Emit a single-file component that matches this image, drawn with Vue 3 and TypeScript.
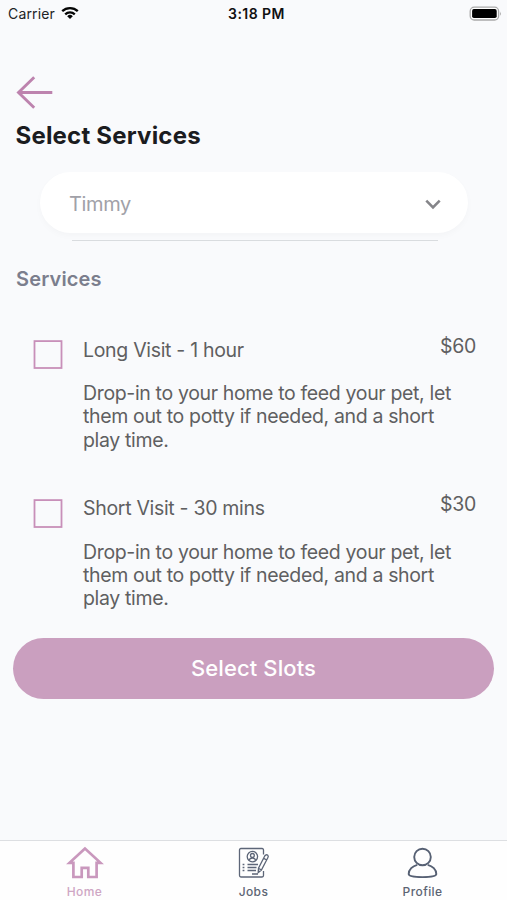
<script setup lang="ts">
import { ref } from 'vue'

interface Service {
  id: number
  name: string
  price: string
  description: string
}

const pet = ref('Timmy')
const selected = ref<number[]>([])
const services: Service[] = [
  {
    id: 1,
    name: 'Long Visit - 1 hour',
    price: '$60',
    description: 'Drop-in to your home to feed your pet, let them out to potty if needed, and a short play time.',
  },
  {
    id: 2,
    name: 'Short Visit - 30 mins',
    price: '$30',
    description: 'Drop-in to your home to feed your pet, let them out to potty if needed, and a short play time.',
  },
]

function toggle(id: number): void {
  selected.value = selected.value.includes(id)
    ? selected.value.filter((s) => s !== id)
    : [...selected.value, id]
}
</script>

<template>
  <div class="screen">
    <header class="status">
      <div class="carrier">
        <span class="carrier-name">Carrier</span>
        <svg class="wifi" width="18" height="13" viewBox="0 0 18 13">
          <g fill="none" stroke="#050505" stroke-width="2.3">
            <path d="M1.2 4.2 A11.2 11.2 0 0 1 16.8 4.2" />
            <path d="M4.2 7.3 A7 7 0 0 1 13.8 7.3" />
          </g>
          <path d="M6.2 9.2 A4 4 0 0 1 11.8 9.2 L9 12 Z" fill="#050505" />
        </svg>
      </div>
      <span class="time">3:18 PM</span>
      <div class="power">
        <svg width="33" height="15" viewBox="0 0 33 15">
          <rect x="1.2" y="0.2" width="28.4" height="12.8" rx="4" fill="#fff" stroke="#a9a9a9" stroke-width="1.3" />
          <rect x="3.1" y="2.1" width="24.6" height="9" rx="1.8" fill="#000" />
          <path d="M31 4.4 Q32.8 6.6 31 8.8 Z" fill="#a9a9a9" />
        </svg>
      </div>
    </header>

    <main class="content">
      <button class="back" aria-label="Back">
        <svg width="37" height="34" viewBox="0 0 37 34">
          <path d="M36.3 17.5 H2.5 M18.2 2.2 L2.5 17.5 L18.2 32.8" fill="none" stroke="#bd83ae" stroke-width="2.9" />
        </svg>
      </button>
      <h1 class="title">Select Services</h1>

      <div class="picker">
        <span class="picker-value">{{ pet }}</span>
        <svg class="chevron" width="16" height="11" viewBox="0 0 16 11">
          <path d="M1.3 1.6 L8 8.3 L14.7 1.6" fill="none" stroke="#858589" stroke-width="2.6" />
        </svg>
      </div>
      <div class="rule"></div>

      <h2 class="subtitle">Services</h2>

      <section v-for="s in services" :key="s.id" class="service">
        <button
          class="box"
          :class="{ checked: selected.includes(s.id) }"
          :aria-label="s.name"
          @click="toggle(s.id)"
        >
          <svg width="30" height="30" viewBox="0 0 30 30">
            <rect class="outline" x="1.5" y="1.1" width="27" height="26.9" />
          </svg>
        </button>
        <div class="info">
          <div class="line">
            <span class="name">{{ s.name }}</span>
            <span class="price">{{ s.price }}</span>
          </div>
          <p class="description">{{ s.description }}</p>
        </div>
      </section>

      <button class="submit"><span>Select Slots</span></button>
    </main>

    <nav class="tabs">
      <a class="tab active">
        <svg width="38" height="34" viewBox="0 0 38 34">
          <path
            d="M19 2.5 L3.5 16.8 H7.4 V31 H15.7 V21.8 H22.3 V31 H30.6 V16.8 H34.5 Z"
            fill="none" stroke="#c998bd" stroke-width="2.7"
          />
        </svg>
        <span>Home</span>
      </a>
      <a class="tab jobs">
        <svg width="32" height="34" viewBox="0 0 32 34">
          <g fill="none" stroke="#5d6678" stroke-width="1.3">
            <path d="M25.5 8.5 V3.9 Q25.5 2.5 24.1 2.5 H2.9 Q1.5 2.5 1.5 3.9 V29.6 Q1.5 31 2.9 31 H24.1 Q25.5 31 25.5 29.6 V25" />
            <circle cx="14.4" cy="10.6" r="5.2" />
            <circle cx="14.4" cy="9.4" r="1.9" />
            <path d="M11.2 14.1 Q11.7 12.1 14.4 12.1 Q17.1 12.1 17.6 14.1" />
            <path d="M26.6 10.2 Q28 8 29.6 9.1 Q30.9 10.2 29.8 11.8 L23.4 24 L20.2 26.6 L20.5 22.2 Z M25.4 12 L28.6 14 M20.5 22.2 L23.4 24" />
          </g>
          <path
            d="M9.5 18.5 H20 M9.5 21.5 H18.5 M9.5 24.5 H18 M4.6 18.5 H6.4 M4.6 21.5 H6.4 M4.6 24.5 H6.4 M14 28 H20"
            stroke="#5d6678" stroke-width="1.4"
          />
        </svg>
        <span>Jobs</span>
      </a>
      <a class="tab profile">
        <svg width="32" height="34" viewBox="0 0 32 34">
          <g fill="none" stroke="#566073" stroke-width="1.9">
            <circle cx="15.5" cy="11" r="8.3" />
            <path d="M10.3 18.8 C5.5 20 1.7 23.6 1.7 28 C1.7 30 7.5 31.1 15.5 31.1 C23.5 31.1 29.3 30 29.3 28 C29.3 23.6 25.5 20 20.7 18.8" />
          </g>
        </svg>
        <span>Profile</span>
      </a>
    </nav>
  </div>
</template>

<style>
body {
  background: #f9fafc;
}
</style>

<style scoped>
.screen {
  width: 507px;
  height: 900px;
  display: flex;
  flex-direction: column;
  background: #f9fafc;
  color: #5f5f61;
  font-family: Inter, "Liberation Sans", sans-serif;
  overflow: hidden;
}
.screen * {
  box-sizing: border-box;
}
button {
  display: block;
  padding: 0;
  border: 0;
  background: none;
  font-family: inherit;
}
svg {
  display: block;
  flex: none;
  overflow: visible;
}
.status {
  display: grid;
  grid-template-columns: 1fr auto 1fr;
  align-items: center;
  height: 28px;
  padding: 0 5px 0 8px;
  font-size: 14px;
  line-height: 20px;
  color: #222325;
}
.carrier {
  display: flex;
  align-items: center;
  gap: 6.5px;
}
.carrier-name {
  letter-spacing: 0.15px;
}
.wifi {
  margin-top: -1px;
}
.time {
  font-weight: 600;
  letter-spacing: 0.45px;
  margin-right: -3px;
  color: #101012;
}
.power {
  display: flex;
  justify-content: flex-end;
}
.content {
  flex: 1;
}
.back {
  margin: 47px 0 0 16px;
}
.title {
  margin: 12px 0 0 15.5px;
  font-size: 24px;
  line-height: 30px;
  font-weight: 700;
  letter-spacing: 0.2px;
  color: #1b1c1f;
}
.picker {
  display: flex;
  align-items: center;
  justify-content: space-between;
  width: 428px;
  height: 61px;
  margin: 21px 0 0 40px;
  padding: 2px 27px 0 29px;
  border-radius: 31px;
  background: #fff;
  box-shadow: 0 3px 5px rgba(120, 130, 125, 0.04);
}
.picker-value {
  font-size: 20px;
  letter-spacing: -0.35px;
  color: #a1a1a8;
}
.chevron {
  margin-top: 2px;
}
.rule {
  height: 1px;
  margin: 7px 69px 0 72px;
  background: #d9dcdf;
}
.subtitle {
  margin: 26px 0 0 16px;
  font-size: 20px;
  line-height: 24px;
  font-weight: 600;
  letter-spacing: 0.15px;
  color: #7b7e8d;
}
.service {
  display: flex;
  gap: 20px;
  height: 158.7px;
  padding: 0 31px 0 33px;
}
.subtitle + .service {
  margin-top: 46.8px;
}
.box {
  flex: none;
  width: 30px;
  height: 30px;
  margin-top: 2.2px;
}
.outline {
  fill: none;
  stroke: #c88fb9;
  stroke-width: 1.8;
}
.box.checked .outline {
  fill: #ca9dbe;
}
.info {
  flex: 1;
}
.line {
  display: flex;
  justify-content: space-between;
  height: 44.4px;
  font-size: 19.5px;
  line-height: 24px;
}
.name {
  letter-spacing: -0.31px;
}
.price {
  margin-top: -4px;
  letter-spacing: -0.3px;
}
.description {
  width: 375px;
  margin: 0;
  font-size: 19.5px;
  line-height: 23.2px;
  letter-spacing: -0.35px;
}
.submit {
  width: 481px;
  height: 61px;
  margin: -17.5px 0 0 13px;
  border-radius: 31px;
  background: #ca9fbf;
  color: #fff;
  font-size: 22px;
  font-weight: 500;
  letter-spacing: 0.1px;
}
.tabs {
  display: grid;
  grid-template-columns: repeat(3, 1fr);
  height: 60px;
  border-top: 1px solid #dddfe2;
  background: #fefefe;
}
.tab {
  display: flex;
  flex-direction: column;
  align-items: center;
  padding-top: 5px;
  font-size: 12px;
  line-height: 16px;
  font-weight: 500;
  letter-spacing: 0.4px;
  color: #5c6473;
}
.tab span {
  margin-top: 4px;
}
.active {
  color: #cea6c4;
}
</style>
